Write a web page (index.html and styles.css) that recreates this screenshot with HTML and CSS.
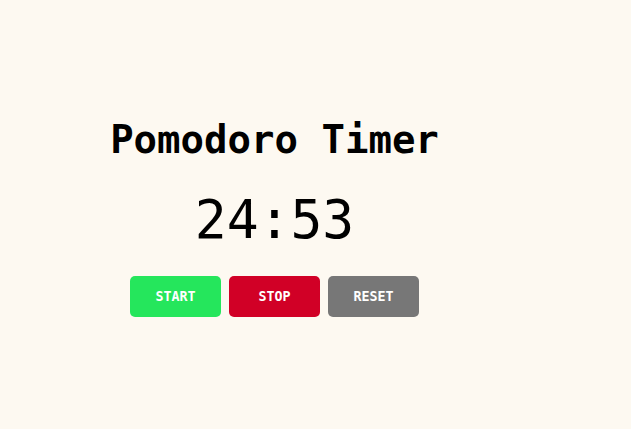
FILE: index.html
```html
<!DOCTYPE html>
<html>
<head>
<meta charset="utf-8">
<link rel="stylesheet" href="styles.css">
</head>
<body>
<main class="timer-app">
  <h1 class="title">Pomodoro Timer</h1>
  <div class="time">24:53</div>
  <div class="controls">
    <button class="btn btn-start">START</button>
    <button class="btn btn-stop">STOP</button>
    <button class="btn btn-reset">RESET</button>
  </div>
</main>
</body>
</html>
```
FILE: styles.css
```css
html, body {
  margin: 0;
  padding: 0;
  background: #fdf9f1;
  font-family: "DejaVu Sans Mono", monospace;
  color: #000;
}
.timer-app {
  width: 533px;
  margin-left: 8px;
  padding-top: 116px;
  display: flex;
  flex-direction: column;
  align-items: center;
}
.title {
  margin: 0;
  font-size: 39px;
  font-weight: bold;
  line-height: 48px;
}
.time {
  margin-top: 24px;
  font-size: 53px;
  line-height: 64px;
}
.controls {
  margin-top: 24px;
  display: flex;
  gap: 8px;
}
.btn {
  width: 91px;
  height: 41px;
  border: none;
  border-radius: 5px;
  color: #fff;
  font-family: "DejaVu Sans Mono", monospace;
  font-size: 13.333px;
  font-weight: bold;
  padding: 0;
}
.btn-start { background: #25e65c; }
.btn-stop { background: #d10026; }
.btn-reset { background: #777777; }
```
